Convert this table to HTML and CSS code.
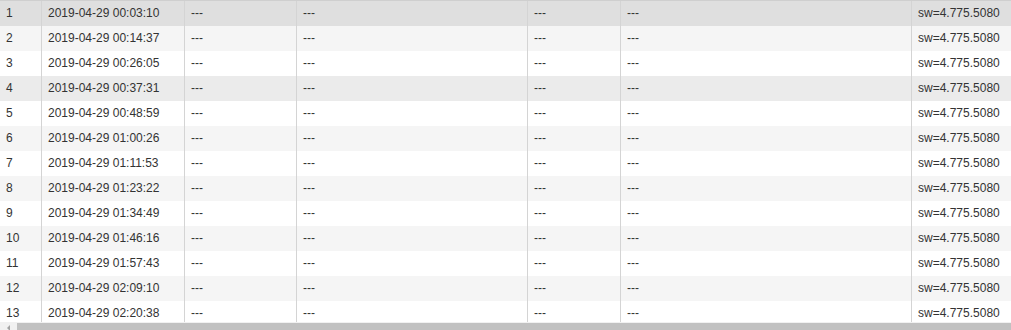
FILE: index.html
```html
<!DOCTYPE html>
<html>
<head>
<meta charset="utf-8">
<link rel="stylesheet" href="styles.css">
</head>
<body>
<div class="grid">
  <div class="viewport">
    <div class="row selected"><div class="c">1</div><div class="c">2019-04-29 00:03:10</div><div class="c">---</div><div class="c">---</div><div class="c">---</div><div class="c">---</div><div class="c last">sw=4.775.5080</div></div>
    <div class="row alt"><div class="c">2</div><div class="c">2019-04-29 00:14:37</div><div class="c">---</div><div class="c">---</div><div class="c">---</div><div class="c">---</div><div class="c last">sw=4.775.5080</div></div>
    <div class="row"><div class="c">3</div><div class="c">2019-04-29 00:26:05</div><div class="c">---</div><div class="c">---</div><div class="c">---</div><div class="c">---</div><div class="c last">sw=4.775.5080</div></div>
    <div class="row hover"><div class="c">4</div><div class="c">2019-04-29 00:37:31</div><div class="c">---</div><div class="c">---</div><div class="c">---</div><div class="c">---</div><div class="c last">sw=4.775.5080</div></div>
    <div class="row"><div class="c">5</div><div class="c">2019-04-29 00:48:59</div><div class="c">---</div><div class="c">---</div><div class="c">---</div><div class="c">---</div><div class="c last">sw=4.775.5080</div></div>
    <div class="row alt"><div class="c">6</div><div class="c">2019-04-29 01:00:26</div><div class="c">---</div><div class="c">---</div><div class="c">---</div><div class="c">---</div><div class="c last">sw=4.775.5080</div></div>
    <div class="row"><div class="c">7</div><div class="c">2019-04-29 01:11:53</div><div class="c">---</div><div class="c">---</div><div class="c">---</div><div class="c">---</div><div class="c last">sw=4.775.5080</div></div>
    <div class="row alt"><div class="c">8</div><div class="c">2019-04-29 01:23:22</div><div class="c">---</div><div class="c">---</div><div class="c">---</div><div class="c">---</div><div class="c last">sw=4.775.5080</div></div>
    <div class="row"><div class="c">9</div><div class="c">2019-04-29 01:34:49</div><div class="c">---</div><div class="c">---</div><div class="c">---</div><div class="c">---</div><div class="c last">sw=4.775.5080</div></div>
    <div class="row alt"><div class="c">10</div><div class="c">2019-04-29 01:46:16</div><div class="c">---</div><div class="c">---</div><div class="c">---</div><div class="c">---</div><div class="c last">sw=4.775.5080</div></div>
    <div class="row"><div class="c">11</div><div class="c">2019-04-29 01:57:43</div><div class="c">---</div><div class="c">---</div><div class="c">---</div><div class="c">---</div><div class="c last">sw=4.775.5080</div></div>
    <div class="row alt"><div class="c">12</div><div class="c">2019-04-29 02:09:10</div><div class="c">---</div><div class="c">---</div><div class="c">---</div><div class="c">---</div><div class="c last">sw=4.775.5080</div></div>
    <div class="row"><div class="c">13</div><div class="c">2019-04-29 02:20:38</div><div class="c">---</div><div class="c">---</div><div class="c">---</div><div class="c">---</div><div class="c last">sw=4.775.5080</div></div>
  </div>
  <div class="hscroll">
    <div class="arrow"><span class="tri"></span></div>
    <div class="thumb"></div>
  </div>
</div>
</body>
</html>
```

FILE: styles.css
```css
html, body {
  margin: 0;
  padding: 0;
  background: #ffffff;
}
body {
  font-family: "Liberation Sans", Arial, sans-serif;
  font-size: 12px;
  color: #333333;
  overflow: hidden;
}
.grid {
  width: 1011px;
  height: 330px;
  overflow: hidden;
  display: flex;
  flex-direction: column;
}
.viewport {
  height: 322px;
  flex: none;
  overflow: hidden;
  border-top: 1px solid #cfcfcf;
  box-sizing: border-box;
}
.row {
  display: grid;
  grid-template-columns: 42px 143px 112px 231px 93px 291px 99px;
  height: 25px;
  background: #ffffff;
}
.row.alt { background: #f5f5f5; }
.row.selected { background: #dfdfdf; }
.row.hover { background: #ebebeb; }
.c {
  box-sizing: border-box;
  border-right: 1px solid #d4d4d4;
  padding-left: 6px;
  line-height: 25px;
  white-space: nowrap;
  overflow: hidden;
}
.c.last { border-right: none; }
.hscroll {
  flex: none;
  height: 17px;
  display: flex;
  background: #f1f1f1;
}
.arrow {
  width: 17px;
  display: flex;
  align-items: flex-start;
  justify-content: center;
  padding-top: 3px;
  box-sizing: border-box;
}
.tri {
  width: 0;
  height: 0;
  border-top: 3px solid transparent;
  border-bottom: 3px solid transparent;
  border-right: 3px solid #a3a3a3;
}
.thumb {
  flex: 1;
  background: #c1c1c1;
  margin-top: 1px;
}
```
